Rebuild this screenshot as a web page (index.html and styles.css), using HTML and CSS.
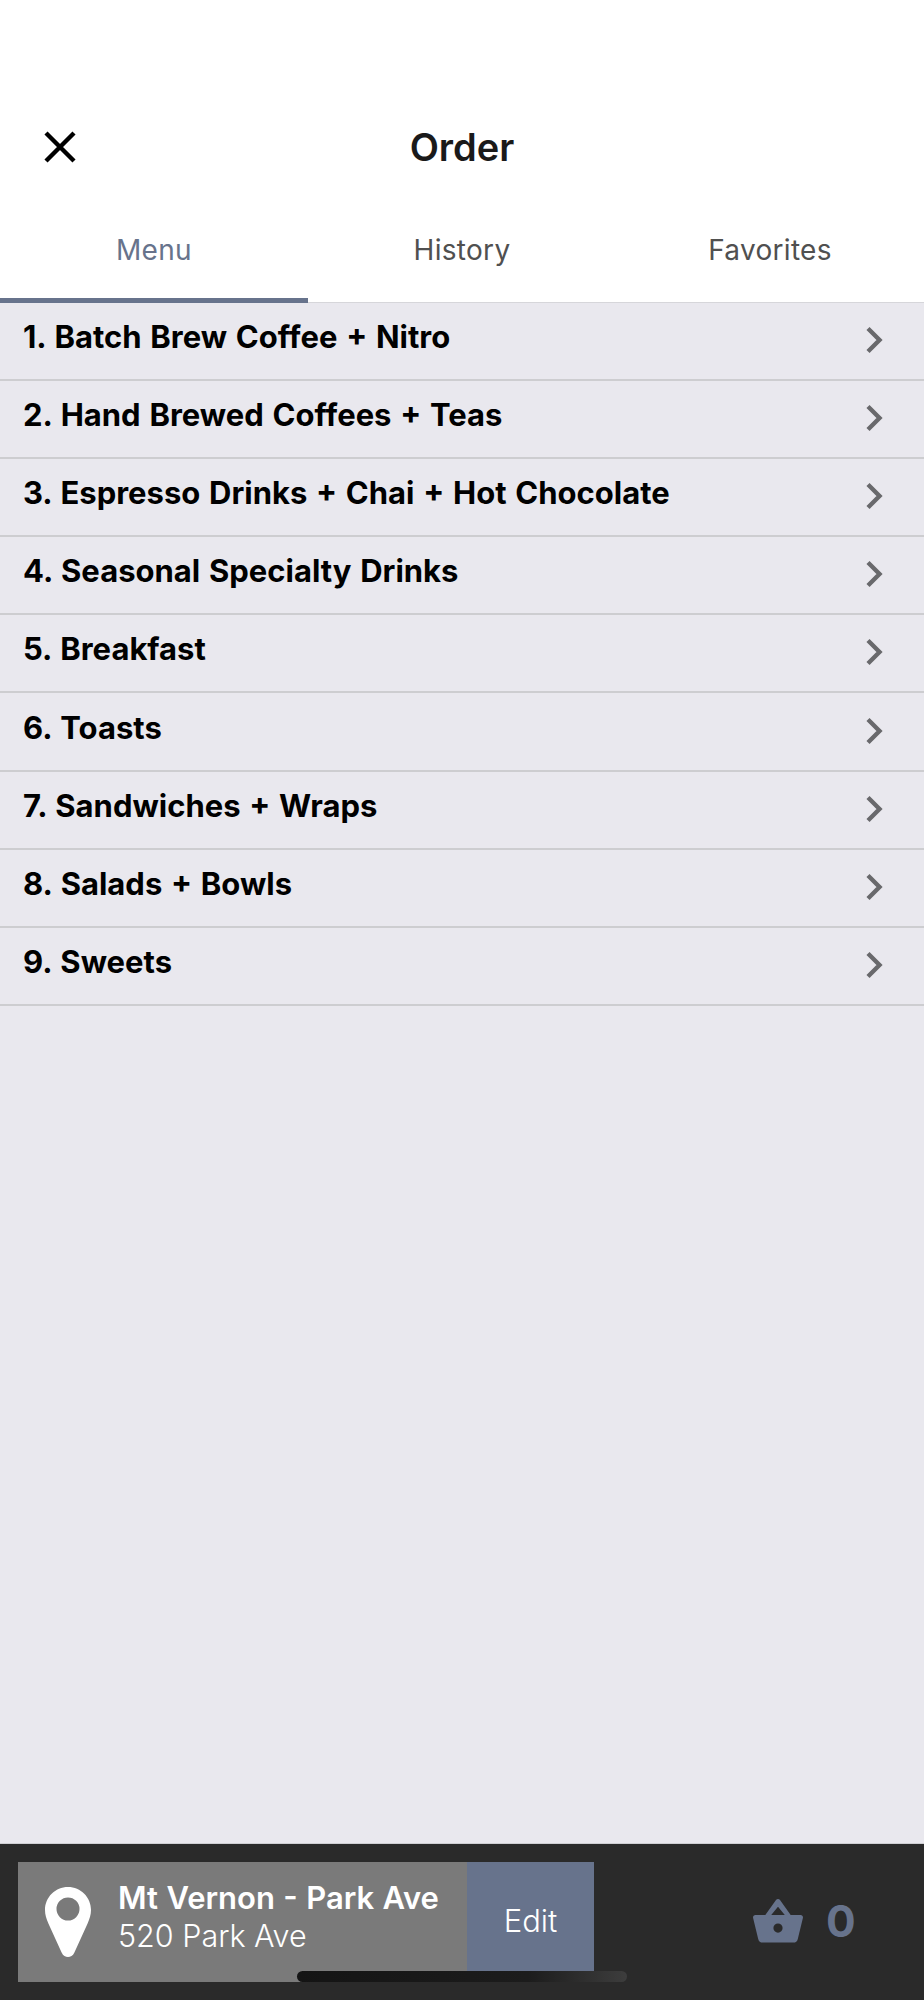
FILE: index.html
```html
<!DOCTYPE html>
<html lang="en">
<head>
  <meta charset="UTF-8">
  <meta name="viewport" content="width=device-width, initial-scale=1.0">
  <title>Order</title>
  <link rel="stylesheet" href="styles.css">
</head>
<body>
<div class="screen">
  <header class="header">
    <button class="close" type="button" aria-label="Close">
      <svg width="34" height="34" viewBox="0 0 34 34"><path d="M3 3 L31 31 M31 3 L3 31" stroke="#000" stroke-width="4.4" fill="none"/></svg>
    </button>
    <h1>Order</h1>
  </header>

  <nav class="tabs">
    <a href="#" class="tab active">Menu</a>
    <a href="#" class="tab">History</a>
    <a href="#" class="tab">Favorites</a>
  </nav>

  <ul class="menu">
    <li><span>1. Batch Brew Coffee + Nitro</span><svg class="chev" width="20" height="28" viewBox="0 0 20 28"><path d="M4 2.5 L15.5 14 L4 25.5" stroke="#69696c" stroke-width="4.4" fill="none"/></svg></li>
    <li><span>2. Hand Brewed Coffees + Teas</span><svg class="chev" width="20" height="28" viewBox="0 0 20 28"><path d="M4 2.5 L15.5 14 L4 25.5" stroke="#69696c" stroke-width="4.4" fill="none"/></svg></li>
    <li><span>3. Espresso Drinks + Chai + Hot Chocolate</span><svg class="chev" width="20" height="28" viewBox="0 0 20 28"><path d="M4 2.5 L15.5 14 L4 25.5" stroke="#69696c" stroke-width="4.4" fill="none"/></svg></li>
    <li><span>4. Seasonal Specialty Drinks</span><svg class="chev" width="20" height="28" viewBox="0 0 20 28"><path d="M4 2.5 L15.5 14 L4 25.5" stroke="#69696c" stroke-width="4.4" fill="none"/></svg></li>
    <li><span>5. Breakfast</span><svg class="chev" width="20" height="28" viewBox="0 0 20 28"><path d="M4 2.5 L15.5 14 L4 25.5" stroke="#69696c" stroke-width="4.4" fill="none"/></svg></li>
    <li><span>6. Toasts</span><svg class="chev" width="20" height="28" viewBox="0 0 20 28"><path d="M4 2.5 L15.5 14 L4 25.5" stroke="#69696c" stroke-width="4.4" fill="none"/></svg></li>
    <li><span>7. Sandwiches + Wraps</span><svg class="chev" width="20" height="28" viewBox="0 0 20 28"><path d="M4 2.5 L15.5 14 L4 25.5" stroke="#69696c" stroke-width="4.4" fill="none"/></svg></li>
    <li><span>8. Salads + Bowls</span><svg class="chev" width="20" height="28" viewBox="0 0 20 28"><path d="M4 2.5 L15.5 14 L4 25.5" stroke="#69696c" stroke-width="4.4" fill="none"/></svg></li>
    <li><span>9. Sweets</span><svg class="chev" width="20" height="28" viewBox="0 0 20 28"><path d="M4 2.5 L15.5 14 L4 25.5" stroke="#69696c" stroke-width="4.4" fill="none"/></svg></li>
  </ul>

  <footer class="bottom">
    <div class="store">
      <div class="store-info">
        <svg class="pin" width="46" height="70" viewBox="0 0 46 70"><path fill-rule="evenodd" fill="#fff" d="M23 0 C35.7 0 46 10.3 46 23 C46 28 44.6 31.5 42.6 36.4 L29.4 65.5 C27.8 69 25.5 70 23 70 C20.5 70 18.2 69 16.6 65.5 L3.4 36.4 C1.4 31.5 0 28 0 23 C0 10.3 10.3 0 23 0 Z M23 10.5 A11.5 11.5 0 1 0 23 33.5 A11.5 11.5 0 1 0 23 10.5 Z"/></svg>
        <div class="store-text">
          <strong>Mt Vernon - Park Ave</strong>
          <span>520 Park Ave</span>
        </div>
      </div>
      <a href="#" class="edit">Edit</a>
    </div>
    <div class="cart">
      <svg width="50" height="44" viewBox="0 0 50 44"><path fill-rule="evenodd" fill="#67738c" d="M25 0 C25.8 0 26.5 .4 27 1.1 L37.7 16 L47.5 16 C49.3 16 50.3 17.4 49.9 19 L44.8 40 C44.2 42.6 42.6 43.6 40.5 43.6 L9.5 43.6 C7.4 43.6 5.8 42.6 5.2 40 L.1 19 C-.3 17.4 .7 16 2.5 16 L12.3 16 L23 1.1 C23.5 .4 24.2 0 25 0 Z M25 7.8 L18.2 16 L31.8 16 Z M25 24.5 A4.6 4.6 0 1 0 25 33.7 A4.6 4.6 0 1 0 25 24.5 Z"/></svg>
      <span class="count">0</span>
    </div>
    <div class="home-bar"></div>
  </footer>
</div>
</body>
</html>
```

FILE: styles.css
```css
* {
  margin: 0;
  padding: 0;
  box-sizing: border-box;
}

body {
  font-family: 'Inter', 'Liberation Sans', sans-serif;
  background-color: #fff;
}

.screen {
  width: 924px;
  height: 2000px;
  display: flex;
  flex-direction: column;
  background-color: #e9e8ee;
}

.header {
  height: 207px;
  padding-top: 86px;
  background-color: #fff;
  display: flex;
  align-items: center;
  justify-content: center;
  position: relative;
}

.header h1 {
  font-size: 38px;
  font-weight: 600;
  color: #1a1a1a;
}

.close {
  position: absolute;
  left: 43px;
  top: 130px;
  width: 34px;
  height: 34px;
  border: none;
  background: none;
}

.close svg {
  display: block;
}

.tabs {
  height: 96px;
  display: flex;
  background-color: #fff;
  border-bottom: 1px solid #d6d6da;
}

.tab {
  flex: 1;
  height: 96px;
  padding-top: 26px;
  text-align: center;
  text-decoration: none;
  font-size: 28px;
  letter-spacing: 0.3px;
  color: #505050;
}

.tab.active {
  color: #67738c;
  border-bottom: 5px solid #67738c;
}

.menu {
  list-style: none;
}

.menu li {
  height: 78.1px;
  padding: 0 40px 0 23px;
  display: flex;
  align-items: center;
  justify-content: space-between;
  border-bottom: 2px solid #cdcdd0;
  font-size: 31px;
  font-weight: 700;
  word-spacing: 1.4px;
  color: #000;
}

.menu li span {
  margin-bottom: 9px;
}

.chev {
  display: block;
  margin-bottom: 2px;
}

.bottom {
  margin-top: auto;
  height: 157px;
  padding-top: 18px;
  background-color: #2a2a2a;
  border-top: 1px solid #cfcfd3;
  display: flex;
  position: relative;
}

.store {
  margin-left: 18px;
  width: 576px;
  height: 120px;
  display: flex;
}

.store-info {
  flex: 1;
  padding-left: 27px;
  background-color: #7a7a7a;
  display: flex;
  align-items: center;
  gap: 27px;
}

.store-text {
  display: flex;
  flex-direction: column;
  color: #fff;
  margin-top: -10px;
}

.store-text strong {
  font-size: 31px;
  font-weight: 600;
  line-height: 38px;
  word-spacing: 0.6px;
}

.store-text span {
  font-size: 30.5px;
  font-weight: 300;
  line-height: 38px;
}

.edit {
  width: 127px;
  padding-bottom: 4px;
  background-color: #67738c;
  color: #fff;
  font-size: 31px;
  font-weight: 300;
  text-decoration: none;
  display: flex;
  align-items: center;
  justify-content: center;
}

.cart {
  margin-left: 159px;
  height: 117px;
  display: flex;
  align-items: center;
  gap: 23px;
  color: #67738c;
}

.count {
  font-size: 44px;
  font-weight: 700;
}

.home-bar {
  position: absolute;
  left: 297px;
  top: 127px;
  width: 330px;
  height: 11px;
  border-radius: 6px;
  background: linear-gradient(to right, #141414 0%, #1c1c1c 70%, #3d3d3d 100%);
}
```
